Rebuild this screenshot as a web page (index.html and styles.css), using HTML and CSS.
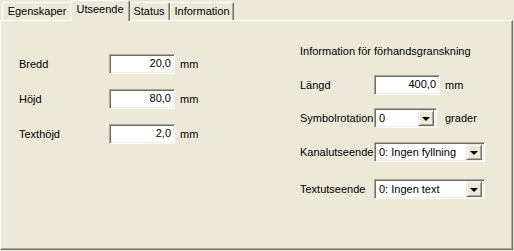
FILE: index.html
```html
<!DOCTYPE html>
<html lang="sv">
<head>
<meta charset="utf-8">
<title>Utseende</title>
<link rel="stylesheet" href="styles.css">
</head>
<body>
<div class="dialog">
  <div class="tabbar">
    <div class="tab tab-egen">Egenskaper</div>
    <div class="tab tab-uts selected">Utseende</div>
    <div class="tab tab-status">Status</div>
    <div class="tab tab-info">Information</div>
  </div>
  <div class="panel">
    <div class="col-left">
      <div class="row">
        <span class="label label-left">Bredd</span>
        <div class="edit edit-num">20,0</div>
        <span class="unit">mm</span>
      </div>
      <div class="row row-gap">
        <span class="label label-left">Höjd</span>
        <div class="edit edit-num">80,0</div>
        <span class="unit">mm</span>
      </div>
      <div class="row row-gap">
        <span class="label label-left">Texthöjd</span>
        <div class="edit edit-num">2,0</div>
        <span class="unit">mm</span>
      </div>
    </div>
    <div class="col-right">
      <div class="heading">Information för förhandsgranskning</div>
      <div class="row r-langd">
        <span class="label label-right">Längd</span>
        <div class="edit edit-num">400,0</div>
        <span class="unit">mm</span>
      </div>
      <div class="row r-symbol">
        <span class="label label-right">Symbolrotation</span>
        <div class="combo combo-small">
          <span class="combo-text">0</span>
          <span class="combo-btn"><span class="arrow"></span></span>
        </div>
        <span class="unit unit-grader">grader</span>
      </div>
      <div class="row r-kanal">
        <span class="label label-right">Kanalutseende</span>
        <div class="combo combo-wide">
          <span class="combo-text">0: Ingen fyllning</span>
          <span class="combo-btn"><span class="arrow"></span></span>
        </div>
      </div>
      <div class="row r-text">
        <span class="label label-right">Textutseende</span>
        <div class="combo combo-wide">
          <span class="combo-text">0: Ingen text</span>
          <span class="combo-btn"><span class="arrow"></span></span>
        </div>
      </div>
    </div>
  </div>
</div>
</body>
</html>
```
FILE: styles.css
```css
* { box-sizing: border-box; }

html, body {
  margin: 0;
  padding: 0;
  background: #ece9d8;
}

body {
  font-family: "Liberation Sans", Arial, sans-serif;
  font-size: 11px;
  line-height: 13px;
  color: #000;
  width: 514px;
  height: 251px;
  overflow: hidden;
}

.dialog {
  width: 514px;
}

.tabbar {
  display: flex;
  align-items: flex-end;
  height: 20px;
  padding-left: 2px;
}

.tab {
  position: relative;
  height: 18px;
  padding-top: 2px;
  text-align: center;
  white-space: nowrap;
  background: #ece9d8;
  border-top: 1px solid #fff;
  border-left: 1px solid #fff;
  border-right: 1px solid #716f64;
  box-shadow: inset -1px 0 0 #aca899;
  border-top-left-radius: 2px;
  border-top-right-radius: 2px;
}

.tab-egen { width: 70px; }
.tab-uts { width: 56px; }
.tab-status { width: 42px; }
.tab-info { width: 64px; }

.tab.selected {
  z-index: 2;
  width: 60px;
  height: 21px;
  margin: 0 -2px -1px -2px;
}

.panel {
  display: flex;
  width: 513px;
  height: 230px;
  background: #ece9d8;
  border: 1px solid;
  border-color: #fff #716f64 #716f64 #fff;
  box-shadow: inset -1px -1px 0 #aca899;
}

.col-left {
  width: 299px;
  padding-left: 18px;
  padding-top: 33px;
}

.col-right {
  padding-top: 24px;
}

.row {
  display: flex;
  align-items: center;
  height: 20px;
}

.row-gap { margin-top: 15px; }

.label-left { width: 90px; }
.label-right { width: 74px; }

.heading { height: 13px; }

.r-langd { margin-top: 17px; }
.r-symbol { margin-top: 13px; }
.r-kanal { margin-top: 14px; }
.r-text { margin-top: 17px; }

.edit {
  width: 66px;
  height: 20px;
  background: #fff;
  border: 1px solid;
  border-color: #aca899 #fff #fff #aca899;
  box-shadow: inset 1px 1px 0 #716f64, inset -1px -1px 0 #f1efe2;
  padding: 2px 3px 0 3px;
}

.edit-num { text-align: right; }

.unit { margin-left: 5px; }
.unit-grader { margin-left: 8px; }

.combo {
  display: flex;
  align-items: center;
  height: 20px;
  background: #fff;
  border: 1px solid;
  border-color: #aca899 #fff #fff #aca899;
  box-shadow: inset 1px 1px 0 #716f64, inset -1px -1px 0 #f1efe2;
  padding: 1px 2px 1px 4px;
}

.combo-small { width: 63px; }
.combo-wide { width: 111px; }

.combo-text {
  flex: 1;
  white-space: nowrap;
  overflow: hidden;
}

.combo-btn {
  display: flex;
  align-items: center;
  justify-content: center;
  width: 16px;
  height: 16px;
  background: #ece9d8;
  border: 1px solid;
  border-color: #ece9d8 #716f64 #716f64 #ece9d8;
  box-shadow: inset 1px 1px 0 #fff, inset -1px -1px 0 #aca899;
}

.arrow {
  width: 0;
  height: 0;
  border-left: 4px solid transparent;
  border-right: 4px solid transparent;
  border-top: 4px solid #000;
  margin-top: 1px;
}
```
